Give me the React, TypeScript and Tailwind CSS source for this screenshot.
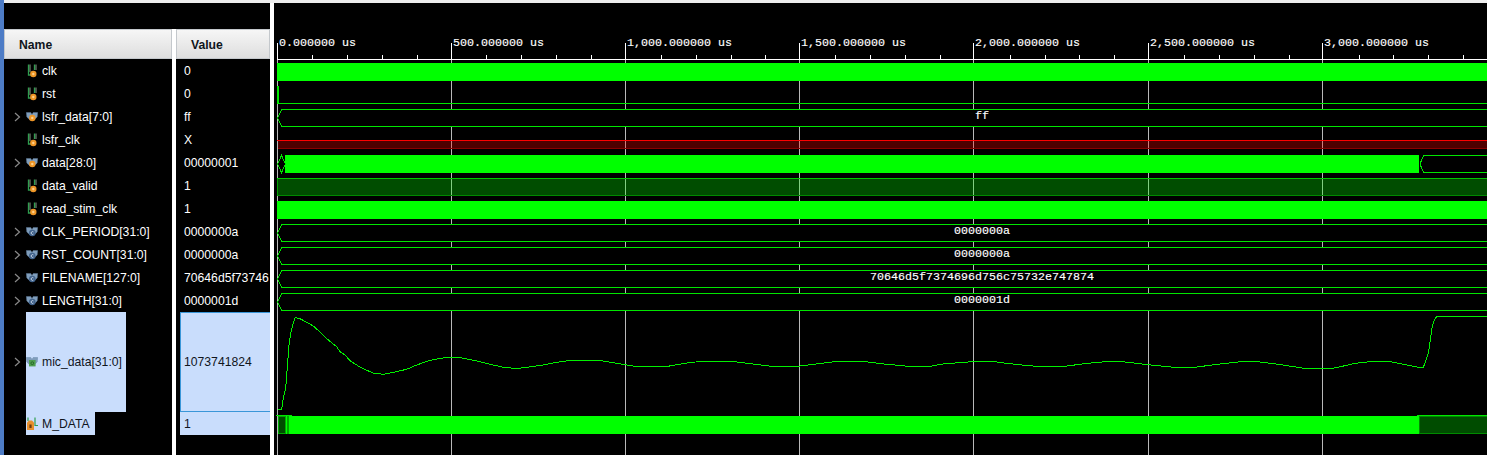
import React from "react";

type Kind = "scalar" | "bus" | "const" | "analog" | "input";
type Row = { name: string; value: string; kind: Kind; tall?: boolean; selected?: boolean };

const rows: Row[] = [
  { name: "clk", value: "0", kind: "scalar" },
  { name: "rst", value: "0", kind: "scalar" },
  { name: "lsfr_data[7:0]", value: "ff", kind: "bus" },
  { name: "lsfr_clk", value: "X", kind: "scalar" },
  { name: "data[28:0]", value: "00000001", kind: "bus" },
  { name: "data_valid", value: "1", kind: "scalar" },
  { name: "read_stim_clk", value: "1", kind: "scalar" },
  { name: "CLK_PERIOD[31:0]", value: "0000000a", kind: "const" },
  { name: "RST_COUNT[31:0]", value: "0000000a", kind: "const" },
  { name: "FILENAME[127:0]", value: "70646d5f73746", kind: "const" },
  { name: "LENGTH[31:0]", value: "0000001d", kind: "const" },
  { name: "mic_data[31:0]", value: "1073741824", kind: "analog", tall: true, selected: true },
  { name: "M_DATA", value: "1", kind: "input", selected: true },
];

function Icon({ kind }: { kind: Kind }) {
  if (kind === "scalar") {
    return (
      <svg width="12" height="14" viewBox="0 0 12 14" className="mr-[4px] shrink-0">
        <path d="M2.5 0.5V11H5M8.5 0.5V6" fill="none" stroke="#2f9e4f" strokeWidth="1.3" />
        <path d="M4 0.5V8M10 0.5V6" fill="none" stroke="#a9c4a9" strokeWidth="0.8" />
        <circle cx="7.3" cy="10" r="3.2" fill="#ee9526" />
        <circle cx="7.3" cy="10" r="1.2" fill="#ffd08a" />
      </svg>
    );
  }
  if (kind === "input") {
    return (
      <svg width="12" height="14" viewBox="0 0 12 14" className="mr-[4px] shrink-0">
        <path d="M9 0.5V8.5H12M2 0.5V4" fill="none" stroke="#2f9e4f" strokeWidth="1.2" />
        <path d="M1 5.5L3 3.5H6L8 5.5V13H1Z" fill="#e88f2c" />
        <rect x="3.4" y="7.5" width="2.2" height="3.5" fill="#6b3d10" />
      </svg>
    );
  }
  const center =
    kind === "bus" ? (
      <>
        <circle cx="6.3" cy="6" r="3.2" fill="#ee9526" />
        <circle cx="6.3" cy="6" r="1.2" fill="#ffd08a" />
      </>
    ) : kind === "const" ? (
      <>
        <circle cx="6.3" cy="6" r="3.3" fill="#41638c" />
        <path d="M7.4 4.9A1.4 1.4 0 1 0 7.4 7.1" fill="none" stroke="#dfe8f2" strokeWidth="0.8" />
      </>
    ) : (
      <>
        <rect x="3" y="3" width="6.6" height="6.4" fill="#4f9f4f" />
        <circle cx="6.3" cy="6.2" r="1.4" fill="none" stroke="#1f5f1f" strokeWidth="0.8" />
      </>
    );
  return (
    <svg width="12" height="14" viewBox="0 0 12 10" className="mr-[4px] shrink-0">
      <path d="M0.3 0.5H4.8L6 2.5L7.2 0.5H11.7L11.2 5L8 8H4L0.8 5Z" fill="#7f9dbb" stroke="#5f7f9f" strokeWidth="0.4" />
      {center}
    </svg>
  );
}

function NameRow({ row }: { row: Row }) {
  const height = row.tall ? "h-[100px]" : "h-[23px]";
  const expandable = row.kind === "bus" || row.kind === "const" || row.kind === "analog";
  const box = row.selected
    ? row.tall
      ? "w-[100px] bg-[#c9ddfc] text-[#10151c]"
      : "w-[69px] bg-[#c9ddfc] text-[#10151c]"
    : "text-white";
  return (
    <div className={`flex items-center pl-[10px] ${height}`}>
      <div className="flex w-[12px] shrink-0 items-center">
        {expandable && (
          <svg width="7" height="10" viewBox="0 0 7 10">
            <path d="M1 1L5.5 5L1 9" fill="none" stroke="#8a8a8a" strokeWidth="1.2" />
          </svg>
        )}
      </div>
      <div className={`flex h-full items-center whitespace-nowrap ${box}`}>
        <Icon kind={row.kind} />
        <span className="pt-[1px]">{row.name}</span>
      </div>
    </div>
  );
}

function ValueRow({ row }: { row: Row }) {
  const cls = row.tall
    ? "h-[100px] border border-r-0 border-[#3a96d8] bg-[#c9ddfc] pl-[3px] text-[#10151c]"
    : row.selected
      ? "h-[23px] bg-[#c9ddfc] pl-[4px] text-[#10151c]"
      : "h-[23px] pl-[4px] text-white";
  return (
    <div className={`flex items-center whitespace-nowrap ${cls}`}>
      <span className="pt-[1px]">{row.value}</span>
    </div>
  );
}

function Header({ label }: { label: string }) {
  return (
    <div className="flex h-[30px] items-center border border-[#c4c8cc] bg-gradient-to-b from-[#f6f6f6] to-[#dedede] pt-[2px] pl-[14px] font-bold text-[#10151c]">
      {label}
    </div>
  );
}

const GRID = [277, 451, 625, 799, 973, 1148, 1322];
const LABELS = [
  "0.000000 us",
  "500.000000 us",
  "1,000.000000 us",
  "1,500.000000 us",
  "2,000.000000 us",
  "2,500.000000 us",
  "3,000.000000 us",
];
const BUSES: [number, string][] = [
  [109, "ff"],
  [224, "0000000a"],
  [247, "0000000a"],
  [270, "70646d5f7374696d756c75732e747874"],
  [293, "0000001d"],
];
const ANALOG =
  "278,409.5 281.7,409.5 283.3,398 285.7,388 287.3,367 289,345 290.7,333 292.7,325 295.3,317.5 300,318.7 306.7,322.3 313.3,326 320,332 328.3,340 336.7,346.7 340,351.7 345,355 350,360.7 358.3,366 366.7,370.3 373.3,373 383.3,374.3 393.3,372.3 406.7,369.3 416.7,365 430,360.3 443.3,358 460,357.5 476.7,361 493.3,365 503.3,367.3 516.7,368.5 526.7,367.3 543,365 556.7,362.3 570,360.5 600,360.5 613,362.7 626.7,365 636.7,366.5 666.7,366.5 686.7,363 700,361.5 733.3,361.5 753.3,364 773.3,366.5 796.7,366.5 810,364.7 836.7,361.5 863.3,361.5 886.7,364.3 900,365.5 910,366.5 930,366.5 940,364.3 963,362.3 976.7,361.5 993,361.5 1006.7,363.3 1025,365.3 1038,366.5 1063,366.5 1080,364.3 1096.7,362.3 1110,361.5 1120,361.5 1136.7,363.3 1153,365.3 1176.7,367.5 1193,367.5 1220,364 1243,361.5 1256.7,361.5 1283,365 1305,368.5 1331.7,368.5 1345,365.7 1355,363.3 1371.7,361.5 1390,361.5 1403.3,364.3 1416.7,367 1423.3,367.5 1426.7,358.3 1428.7,351.7 1430.7,336.7 1432.3,326.7 1434.3,320 1436.7,316.5 1487,316.5";

function Waves() {
  const ticks: number[] = [];
  for (let i = 0; i < 35; i++) {
    if (i % 5 !== 0) ticks.push(Math.round(277 + i * 34.89));
  }
  return (
    <svg width="1213" height="452" viewBox="274 3 1213 452" className="block shrink-0 [font-family:'Liberation_Mono',monospace]">
      <g shapeRendering="crispEdges">
        {GRID.map((x) => (
          <rect key={x} x={x} y={59} width={1} height={396} fill="#b9b9b9" />
        ))}
        {GRID.map((x) => (
          <rect key={x} x={x} y={43} width={1} height={16} fill="#ffffff" />
        ))}
        {ticks.map((x) => (
          <rect key={x} x={x} y={55} width={1} height={4} fill="#ffffff" />
        ))}
        <rect x={277} y={59} width={1210} height={1} fill="#ffffff" />
        <rect x={277} y={63} width={1210} height={18} fill="#00ff00" />
        <rect x={277} y={86} width={2} height={17} fill="#00e600" />
        <rect x={277} y={103} width={1210} height={1} fill="#00e600" />
        <rect x={278} y={141} width={1209} height={7} fill="#ff0000" opacity={0.31} />
        <rect x={277} y={140} width={1210} height={1} fill="#ff0000" />
        <rect x={278} y={148} width={1209} height={1} fill="#8c0000" />
        <rect x={285} y={155} width={1134} height={18} fill="#00ff00" />
        <rect x={278} y={179} width={1209} height={17} fill="#00ff00" opacity={0.3} />
        <rect x={277} y={178} width={1210} height={1} fill="#00c800" />
        <rect x={278} y={195} width={1209} height={1} fill="#008a00" />
        <rect x={277} y={179} width={1} height={17} fill="#00a000" />
        <rect x={277} y={201} width={1210} height={18} fill="#00ff00" />
        <rect x={289} y={416} width={1130} height={18} fill="#00ff00" />
        <rect x={278} y={416} width={8} height={18} fill="#00a800" />
        <rect x={279} y={417} width={6} height={16} fill="#004c00" />
        <rect x={286} y={416} width={1} height={18} fill="#00ff00" />
        <rect x={287} y={416} width={2} height={18} fill="#00a800" />
        <rect x={276} y={415} width={16} height={1} fill="#00e600" />
        <rect x={1417} y={415} width={70} height={1} fill="#00e600" />
        <rect x={1419} y={416} width={68} height={18} fill="#008a00" />
        <rect x={1420} y={417} width={67} height={16} fill="#004c00" />
      </g>
      <g fill="#000000" stroke="#00e600" strokeWidth="1" shapeRendering="crispEdges">
        {BUSES.map(([y]) => (
          <path key={y} d={`M1488 ${y + 0.5}H282L277.5 ${y + 9}L282 ${y + 17.5}H1488`} />
        ))}
        <path d="M281.5 155.5L285.5 164L281.5 172.5L277.5 164Z" />
        <path d="M1488 155.5H1423.5L1420 164L1423.5 172.5H1488" />
      </g>
      <polyline points={ANALOG} fill="none" stroke="#00f000" strokeWidth="1" shapeRendering="crispEdges" />
      <g fill="#ffffff" stroke="#ffffff" strokeWidth="0.15" fontSize="11.67">
        {GRID.map((x, i) => (
          <text key={x} x={x + 2} y={46}>
            {LABELS[i]}
          </text>
        ))}
        {BUSES.map(([y, label]) => (
          <text key={y} x={982} y={y + 10} textAnchor="middle">
            {label}
          </text>
        ))}
      </g>
    </svg>
  );
}

export default function App() {
  return (
    <div className="flex h-[455px] w-[1487px] overflow-hidden bg-black text-[12.2px] [font-family:'Liberation_Sans',Arial,sans-serif]">
      <div className="w-[4px] shrink-0 bg-[#4d7cc6]" />
      <div className="flex min-w-0 flex-1 flex-col">
        <div className="h-[3px] shrink-0 bg-[#eeeeee]" />
        <div className="flex flex-1">
          <div className="flex w-[172px] shrink-0 flex-col">
            <div className="h-[26px] shrink-0" />
            <div className="flex flex-1">
              <div className="w-[168px] shrink-0">
                <Header label="Name" />
                {rows.map((r) => (
                  <NameRow key={r.name} row={r} />
                ))}
              </div>
              <div className="w-[4px] shrink-0 bg-white" />
            </div>
          </div>
          <div className="flex w-[94px] shrink-0 flex-col">
            <div className="h-[26px] shrink-0" />
            <Header label="Value" />
            <div className="pl-[4px]">
              {rows.map((r) => (
                <ValueRow key={r.name} row={r} />
              ))}
            </div>
          </div>
          <div className="w-[4px] shrink-0 bg-white" />
          <Waves />
        </div>
      </div>
    </div>
  );
}
